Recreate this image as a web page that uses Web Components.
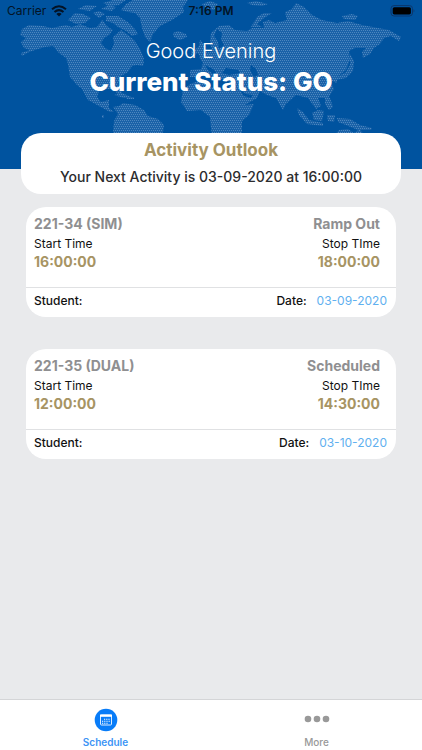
<!DOCTYPE html>
<html lang="en">
<head>
<meta charset="utf-8">
<meta name="viewport" content="width=device-width, initial-scale=1">
<title>Schedule</title>
<style>
  html, body { margin: 0; min-height: 100%; background: #e9eaec; }
  body { font-family: Inter, "Liberation Sans", sans-serif; color: #111; }
</style>
</head>
<body>
<app-screen>
  <status-header slot="header" greeting="Good Evening" status="Current Status: GO"></status-header>
  <activity-outlook heading="Activity Outlook">Your Next Activity is 03-09-2020 at 16:00:00</activity-outlook>
  <activity-card name="221-34 (SIM)" state="Ramp Out" start="16:00:00" stop="18:00:00" date="03-09-2020"></activity-card>
  <activity-card name="221-35 (DUAL)" state="Scheduled" start="12:00:00" stop="14:30:00" date="03-10-2020"></activity-card>
  <tab-bar slot="tabs">
    <tab-item label="Schedule" active>
      <svg width="24" height="24" viewBox="0 0 24 24" aria-hidden="true">
        <circle cx="12" cy="12" r="11.3" fill="#087cf8"/>
        <rect x="6.5" y="7" width="11" height="10" rx="1" fill="none" stroke="#dcecff" stroke-width="1"/>
        <path d="M6 6.5h12v2.3H6z" fill="#fff"/>
        <path d="M10 11.2h6.4M8 13.2h8.4M8 15.2h6.4" stroke="#fff" stroke-width="1.1" stroke-dasharray="1.2 1"/>
      </svg>
    </tab-item>
    <tab-item label="More">
      <svg width="26" height="24" viewBox="0 0 26 24" aria-hidden="true" fill="#999">
        <circle cx="4" cy="11" r="3.3"/><circle cx="13" cy="11" r="3.3"/><circle cx="22" cy="11" r="3.3"/>
      </svg>
    </tab-item>
  </tab-bar>
</app-screen>

<script>
class BaseElement extends HTMLElement {
  render(html) {
    if (!this.shadowRoot) this.attachShadow({ mode: "open" });
    this.shadowRoot.innerHTML = html;
  }
  attr(name) { return this.getAttribute(name) || ""; }
}

customElements.define("app-screen", class extends BaseElement {
  connectedCallback() {
    this.render(`
      <style>
        :host { display: flex; flex-direction: column; min-height: 100vh; }
        main { flex: 1; }
      </style>
      <slot name="header"></slot>
      <main><slot></slot></main>
      <slot name="tabs"></slot>`);
  }
});

customElements.define("world-map", class extends BaseElement {
  connectedCallback() {
    this.render(`
      <style>
        :host { display: block; }
        svg { display: block; width: 100%; height: 100%; }
      </style>
      <svg viewBox="0 0 422 169" preserveAspectRatio="xMidYMin slice" aria-hidden="true">
        <defs>
          <pattern id="dots" width="2" height="4" patternUnits="userSpaceOnUse">
            <path d="M0 0h2v4H0z" fill="#1a62a8"/>
            <path d="M0 0h1v1H0zM1 2h1v1H1z" fill="#4d87bf"/>
          </pattern>
        </defs>
        <g fill="url(#dots)">
          <path d="M22 29L29 25L43 26L52 28L66 25L72 27L80 24L90 28L97 27L102 20L108 27L113 30L109 35L104 38L101 43L105 48L111 51L114 44L113 37L121 30L128 35L134 40L140 49L144 59L141 64L132 66L128 72L121 76L118 84L122 93L119 96L114 89L106 89L99 91L97 97L101 102L109 100L109 108L114 112L110 112L99 106L88 100L82 89L77 85L70 77L68 64L66 58L59 53L53 46L45 47L38 49L29 52L22 56L21 53L30 50L24 48L21 42L26 38L20 35Z"/>
          <path d="M68 20L75 13L83 14L91 18L85 23L76 24ZM78 9L86 5L97 6L90 11ZM93 13L99 11L105 14L99 18ZM101 9L109 5L116 7L112 11ZM103 3L113 0L126 0L119 5L109 6ZM106 16L118 16L128 22L134 28L138 34L132 36L126 31L118 27L113 23L106 21Z"/>
          <path d="M121 10L126 4L133 0L188 0L183 7L184 12L172 20L160 26L153 34L150 42L145 37L142 28L140 18L135 13L128 12ZM173 33L178 31L186 34L187 37L180 40L174 37ZM138 61L144 61L143 66L137 65Z"/>
          <path d="M114 95L122 93L131 97L124 98ZM126 97L134 97L134 99L127 99ZM113 107L119 106L123 103L135 105L144 110L148 116L158 119L164 125L163 132L155 142L148 154L139 169L130 169L119 143L113 133L114 121L118 114ZM102 115L104 115L104 118L102 118Z"/>
          <path d="M190 70L201 69L203 63L199 57L205 53L213 51L210 44L211 33L219 26L229 25L235 30L247 31L252 28L264 28L263 22L269 20L275 23L287 20L285 12L292 9L296 3L304 7L312 15L322 20L337 23L348 21L362 25L378 28L389 30L401 37L399 41L391 36L384 38L380 44L374 48L370 54L363 58L362 52L366 48L355 48L349 51L350 60L346 70L337 77L337 83L330 80L334 89L328 98L318 98L321 106L316 109L308 98L296 95L286 104L283 110L276 98L267 95L260 91L257 98L245 105L254 104L249 115L242 121L242 135L231 148L224 169L216 169L213 148L210 117L201 110L187 111L181 102L183 90L190 84L202 80L208 87L217 87L227 90L232 83L224 79L214 78L206 73L200 77L190 77Z"/>
          <path d="M195 50L199 46L200 40L205 45L208 55L200 56ZM191 51L196 49L197 54L191 55ZM251 27L257 17L264 13L272 13L264 18L257 24L262 27ZM202 4L210 1L218 4L214 10L206 8ZM247 3L256 1L268 4L262 6L252 5ZM342 16L352 14L358 16L355 20L344 19ZM350 54L354 61L353 71L346 78L336 80L337 77L346 72L350 65Z"/>
          <path d="M297 108L303 112L309 120L323 123L323 126L307 124L299 115ZM312 113L318 110L324 111L322 121L314 120ZM325 96L330 98L333 107L329 110L325 104ZM327 115L335 115L334 122L328 121ZM337 118L350 119L360 125L372 128L371 130L358 130L346 125L338 122ZM330 141L339 130L348 129L354 133L360 129L368 142L375 160L356 166L329 158Z"/>
        </g>
        <path d="M217 29L222 33L221 40L224 45L219 49L218 42L214 36ZM222 73L226 68L238 70L240 73L229 75ZM251 65L256 69L258 75L254 77L250 70ZM205 65L213 69L220 77L215 76L207 69ZM239 89L246 94L253 95L251 98L244 96Z" fill="#00539f"/>
      </svg>`);
  }
});

customElements.define("device-status", class extends BaseElement {
  connectedCallback() {
    this.render(`
      <style>
        :host { display: grid; grid-template-columns: 1fr auto 1fr; align-items: center; height: 21px; padding: 0 7px; color: #031326; font-size: 12px; }
        .left { display: flex; align-items: center; gap: 5px; }
        .time { font-weight: 600; }
        .battery { justify-self: end; }
      </style>
      <span class="left"><span>Carrier</span>
        <svg width="16" height="12" viewBox="0 0 16 12" fill="none" stroke="currentColor" stroke-width="2" aria-hidden="true">
          <path d="M1 4.2Q8-1.8 15 4.2M3.5 7Q8 3.2 12.5 7"/><path d="M5.4 8.9Q8 6.8 10.6 8.9L8 11.6Z" fill="currentColor" stroke="none"/>
        </svg>
      </span>
      <span class="time">7:16 PM</span>
      <svg class="battery" width="25" height="12" viewBox="0 0 25 12" aria-hidden="true">
        <rect x="1" y=".6" width="21.5" height="10.4" rx="3" fill="none" stroke="#0b376c"/>
        <rect x="2.7" y="2.2" width="18.2" height="7.2" rx="1.6" fill="#000"/>
        <path d="M23.6 4q1.6 1.8 0 3.6z" fill="#0b376c"/>
      </svg>`);
  }
});

customElements.define("status-header", class extends BaseElement {
  connectedCallback() {
    this.render(`
      <style>
        :host { display: grid; background: #00539f; color: #fff; text-align: center; }
        world-map, .content { grid-area: 1 / 1; min-width: 0; }
        world-map { height: 0; min-height: 100%; overflow: hidden; }
        .content { z-index: 1; padding-bottom: 70px; }
        p, h1 { margin: 0; }
        p { padding-top: 16px; font-size: 20px; line-height: 28px; font-weight: 300; }
        h1 { font-size: 26px; line-height: 34px; font-weight: 800; }
      </style>
      <world-map></world-map>
      <div class="content">
        <device-status></device-status>
        <p>${this.attr("greeting")}</p>
        <h1>${this.attr("status")}</h1>
      </div>`);
  }
});

customElements.define("activity-outlook", class extends BaseElement {
  connectedCallback() {
    this.render(`
      <style>
        :host { display: block; position: relative; z-index: 2; margin: -36px 21px 13px; padding: 5px 8px 3px; border-radius: 20px; background: #fff; text-align: center; }
        h2, p { margin: 0; }
        h2 { font-size: 17px; line-height: 25px; font-weight: 700; color: #a79463; }
        p { font-size: 14px; line-height: 28px; font-weight: 500; color: #2c2c2e; }
      </style>
      <h2>${this.attr("heading")}</h2>
      <p><slot></slot></p>`);
  }
});

customElements.define("activity-card", class extends BaseElement {
  connectedCallback() {
    this.render(`
      <style>
        :host { display: block; margin: 0 26px 32px; border-radius: 20px; background: #fff; color: #111; font-size: 12px; line-height: 20px; }
        .times { display: flex; justify-content: space-between; padding: 7px 16px 17px 8px; }
        .stop { text-align: right; }
        h3, p { margin: 0; }
        h3 { font-size: 14px; line-height: 20px; font-weight: 700; color: #8f8f91; }
        p { line-height: 19px; }
        .value { font-size: 14px; line-height: 17px; font-weight: 700; color: #a79463; }
        footer { display: flex; justify-content: space-between; padding: 3px 9px 6px 8px; border-top: 1px solid #e0e1e3; font-weight: 500; }
        .date { display: flex; gap: 10px; }
        time { color: #5fb0ef; font-weight: 400; }
      </style>
      <div class="times">
        <div><h3>${this.attr("name")}</h3><p>Start Time</p><p class="value">${this.attr("start")}</p></div>
        <div class="stop"><h3>${this.attr("state")}</h3><p>Stop TIme</p><p class="value">${this.attr("stop")}</p></div>
      </div>
      <footer><span>Student:</span><span class="date"><span>Date:</span><time>${this.attr("date")}</time></span></footer>`);
  }
});

customElements.define("tab-bar", class extends BaseElement {
  connectedCallback() {
    this.render(`
      <style>
        :host { display: block; background: #fff; border-top: 1px solid #d4d5d7; }
        nav { display: flex; }
      </style>
      <nav aria-label="Main"><slot></slot></nav>`);
  }
});

customElements.define("tab-item", class extends BaseElement {
  connectedCallback() {
    this.render(`
      <style>
        :host { display: flex; flex: 1; color: #999; }
        :host([active]) { color: #3b94f5; }
        button { flex: 1; display: flex; flex-direction: column; align-items: center; gap: 3px; padding: 8px 0 1px; border: 0; background: none; color: inherit; font: inherit; font-size: 10px; line-height: 14px; font-weight: 500; }
        :host([active]) button { font-weight: 600; }
      </style>
      <button type="button"><slot></slot><span>${this.attr("label")}</span></button>`);
  }
});
</script>
</body>
</html>
